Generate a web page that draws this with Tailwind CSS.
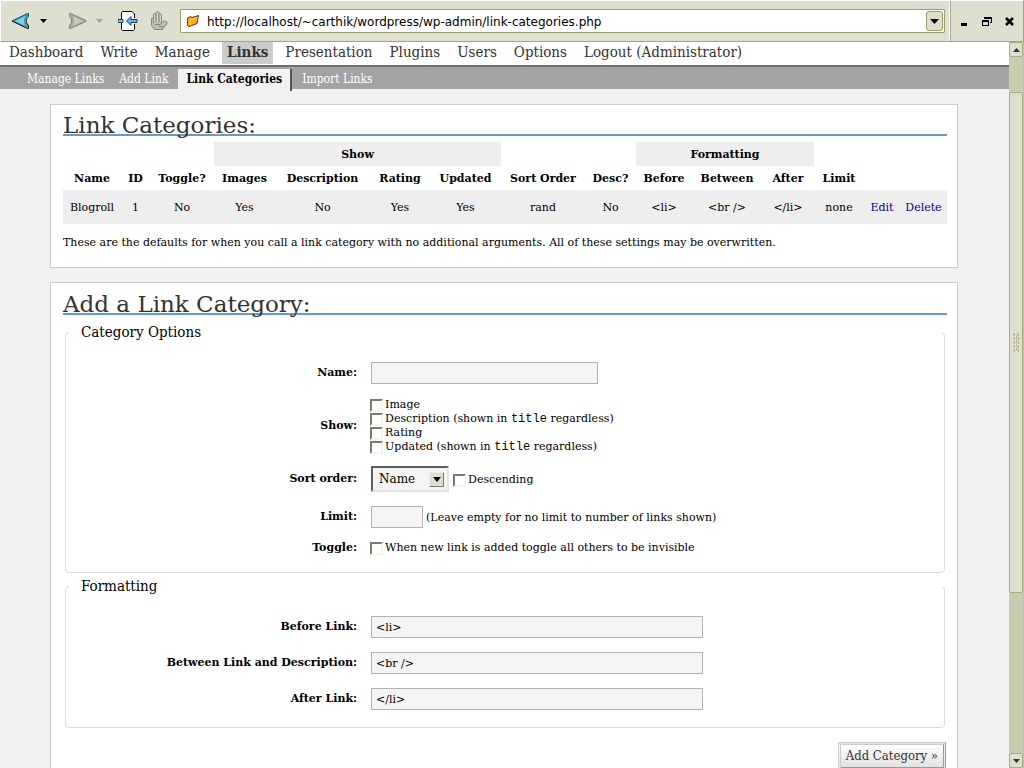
<!DOCTYPE html>
<html lang="en">
<head>
<meta charset="utf-8">
<title>Link Categories</title>
<script src="https://cdn.jsdelivr.net/npm/@tailwindcss/browser@4"></script>
</head>
<body class="h-screen overflow-hidden flex flex-col bg-[#f1f1f1] text-black text-[11px] leading-[14px] font-['DejaVu_Serif',serif]">

<!-- Browser toolbar -->
<header class="h-[42px] shrink-0 flex items-center bg-[#dedfce] border-t border-t-white border-b border-b-[#a3a588] border-l border-l-white border-r border-r-[#a3a588]">
  <div class="w-[179px] shrink-0 flex items-center">
    <button type="button" aria-label="Back" class="ml-[10px]"><svg width="19" height="18" viewBox="0 0 19 18"><path d="M16.500 1.500h1v3l-2 2.500v4l2 2.500v3h-1L1 9.500v-1z" fill="#4c96b0"/><path d="M14.500 4L4 9l10.500 5-1.500-3V7z" fill="#7ed0f0"/><path d="M1 9l15.500-7.500h1v3l-2 2.500v4" fill="none" stroke="#1f4f66"/><path d="M1 9l15.500 7.500h1v-3l-2-2.500" fill="none" stroke="#111"/></svg></button>
    <button type="button" aria-label="Back history" class="ml-[10px]"><svg width="7" height="4" viewBox="0 0 7 4"><path d="M0 0h7L3.500 4z"/></svg></button>
    <button type="button" aria-label="Forward" class="ml-[21px]"><svg width="19" height="18" viewBox="0 0 19 18"><path d="M2.500 1.500h-1v3l2 2.500v4l-2 2.500v3h1L18 9.500v-1z" fill="#a9aa9f" stroke="#85867c"/><path d="M4.500 4L15 9 4.500 14 6 11V7z" fill="#c9cabd"/></svg></button>
    <button type="button" aria-label="Forward history" class="ml-[9px]"><svg width="7" height="4" viewBox="0 0 7 4"><path d="M0 0h7L3.500 4z" fill="#a3a49a"/></svg></button>
    <button type="button" aria-label="Reload" class="ml-[15px]"><svg width="20" height="20" viewBox="0 0 20 20"><path d="M3.500 1h10l3 3v15h-13z" fill="#fff"/><path d="M3.500 8V1.500l1-1h9.500l2.500 2.500V7M3.500 12v6.500l1 1h11l1-1V13" fill="none" stroke="#000"/><path d="M0 8.500h5v3H0z" fill="#8cc4ee" stroke="#1c3d5c"/><path d="M8.500 10L13 5.500v3h6v3h-6v3z" fill="#6db3e8" stroke="#1c3d5c"/></svg></button>
    <button type="button" aria-label="Stop" class="ml-[12px]"><svg width="18" height="20" viewBox="0 0 18 20"><path d="M4.500 18.500l-3-4V7.500L2.500 7l1 1V3.500l1-1 1.500 1V1.500l1-1h1l1 1V3l1-.500 1.500 1V12l2-2h1.500l2 1v2l-3 3-2 2.500z" fill="#bfc0b4" stroke="#85867c"/><path d="M3.500 7v5M6 3v8M9 3v8M11.500 12l-2 1.500M5 13.500h4l1.500 2.500h4M5 18.500h8" fill="none" stroke="#85867c"/><path d="M4.500 4v7M7.500 2v9M10.500 4v7" stroke="#d8d9cc"/></svg></button>
  </div>
  <div class="flex-1 h-6 flex items-center bg-white border border-[#9a9e69] rounded-[1px] pr-px">
    <svg class="ml-[5px] shrink-0" width="14" height="14" viewBox="0 0 14 14"><path d="M1.500 4l3-1.500L6 3.500l6.500-2-1.500 8L3 12.500l-1.500-1z" fill="#ffa91e" stroke="#5a3900"/><path d="M3.500 10.500L4.500 6l7-2.500" fill="none" stroke="#ffd84a"/></svg>
    <input type="text" aria-label="Address" value="http://localhost/~carthik/wordpress/wp-admin/link-categories.php" class="flex-1 min-w-0 ml-[7px] pt-px text-[12px] leading-4 font-['DejaVu_Sans',sans-serif] outline-none">
    <button type="button" aria-label="Show addresses" class="w-[17px] h-5 flex items-center justify-center bg-[#dedfce] border border-[#9a9e69] rounded-[3px]"><svg width="9" height="5" viewBox="0 0 9 5"><path d="M0 0h9L4.500 5z"/></svg></button>
  </div>
  <div class="w-[78px] h-full shrink-0 flex items-center">
    <div class="ml-1 w-[2px] h-full bg-white border-r border-[#a3a588]"></div>
    <button type="button" aria-label="Minimize" class="ml-[10px] mt-[6px]"><svg width="6" height="3"><path d="M0 0h6v3H0z"/></svg></button>
    <button type="button" aria-label="Restore" class="ml-[15px]"><svg width="10" height="9" viewBox="0 0 10 9" shape-rendering="crispEdges"><path d="M2.500 2V.500h7v5H8M2 1.500h8M.500 3.500h6v5h-6zM0 4.500h7" fill="none" stroke="#000"/></svg></button>
    <button type="button" aria-label="Close" class="ml-[13px]"><svg width="9" height="9" viewBox="0 0 9 9"><path d="M1 1l7 7M8 1L1 8" stroke="#000" stroke-width="2.500"/></svg></button>
  </div>
</header>

<div class="flex-1 min-h-0 flex">
  <div class="flex-1 min-w-0 overflow-hidden">
    <nav aria-label="Main menu" class="h-[25px] bg-white border-b-2 border-[#6d6d6d] flex gap-x-[7px] pl-1 text-[15px] leading-[20px] text-[#333] font-['DejaVu_Serif_Condensed','DejaVu_Serif',serif]">
      <a href="#" class="h-[22px] px-[5px]">Dashboard</a>
      <a href="#" class="h-[22px] px-[5px]">Write</a>
      <a href="#" class="h-[22px] px-[5px]">Manage</a>
      <a href="#" class="h-[22px] px-[5px] bg-[#ccc] font-bold">Links</a>
      <a href="#" class="h-[22px] px-[5px]">Presentation</a>
      <a href="#" class="h-[22px] px-[5px]">Plugins</a>
      <a href="#" class="h-[22px] px-[5px]">Users</a>
      <a href="#" class="h-[22px] px-[5px]">Options</a>
      <a href="#" class="h-[22px] px-[5px]">Logout (Administrator)</a>
    </nav>
    <nav aria-label="Links menu" class="h-[22px] bg-[#a3a3a3] flex gap-x-[5px] pl-[22px] text-[12px] leading-[24px] text-white font-['DejaVu_Serif_Condensed','DejaVu_Serif',serif]">
      <a href="#" class="px-[5px]">Manage Links</a>
      <a href="#" class="px-[5px]">Add Link</a>
      <a href="#" class="mt-[2px] h-[22px] leading-[20px] px-2 bg-[#f1f1f1] text-black font-bold border-r-2 border-[#555]">Link Categories</a>
      <a href="#" class="px-[5px]">Import Links</a>
    </nav>

    <main class="pl-[50px] pr-[51px]">
      <section class="mt-[15px] bg-white border border-[#ccc] pl-3 pr-[10px] pt-[11px] pb-[17px]">
        <h2 class="text-[23px] leading-[18px] text-[#333] border-b-2 border-[#69c]">Link Categories:</h2>
        <table class="mt-[6px] w-full table-fixed text-center">
          <colgroup>
            <col class="w-[58px]"><col class="w-[29px]"><col class="w-[64px]"><col class="w-[61px]"><col class="w-[95px]"><col class="w-[60px]"><col class="w-[71px]"><col class="w-[84px]"><col class="w-[51px]"><col class="w-[56px]"><col class="w-[70px]"><col class="w-[52px]"><col class="w-[50px]"><col class="w-[36px]"><col class="w-[47px]">
          </colgroup>
          <thead class="[&_th]:pt-[2px]">
            <tr class="h-6"><td colspan="3"></td><th colspan="4" class="bg-[#eee]">Show</th><td colspan="2"></td><th colspan="3" class="bg-[#eee]">Formatting</th><td colspan="3"></td></tr>
            <tr class="h-6 whitespace-nowrap"><th>Name</th><th>ID</th><th>Toggle?</th><th>Images</th><th>Description</th><th>Rating</th><th>Updated</th><th>Sort Order</th><th>Desc?</th><th>Before</th><th>Between</th><th>After</th><th>Limit</th><td></td><td></td></tr>
          </thead>
          <tbody class="[&_td]:pt-[2px]">
            <tr class="h-[34px] bg-[#eee] whitespace-nowrap"><td>Blogroll</td><td>1</td><td>No</td><td>Yes</td><td>No</td><td>Yes</td><td>Yes</td><td>rand</td><td>No</td><td>&lt;li&gt;</td><td>&lt;br /&gt;</td><td>&lt;/li&gt;</td><td>none</td><td><a href="#" class="text-[#009]">Edit</a></td><td><a href="#" class="text-[#009]">Delete</a></td></tr>
          </tbody>
        </table>
        <p class="mt-[12px]">These are the defaults for when you call a link category with no additional arguments. All of these settings may be overwritten.</p>
      </section>

      <section class="mt-[14px] bg-white border border-[#ccc] pl-3 pr-[10px] pt-[12px] pb-[18px]">
        <h2 class="text-[23px] leading-[18px] text-[#333] border-b-2 border-[#69c]">Add a Link Category:</h2>
        <form>
          <fieldset class="mt-[8px] mx-[2px] border border-[#ddd] rounded-[4px] pl-[3px] pr-[2px] pb-[17px]">
            <legend class="w-full pl-3 text-[15px] leading-[18px] font-['DejaVu_Serif_Condensed','DejaVu_Serif',serif]">Category Options</legend>
            <div class="mt-[21px] grid grid-cols-[33%_1fr] gap-x-[13px] items-center">
              <label for="name" class="text-right font-bold">Name:</label>
              <div><input id="name" type="text" class="block ml-px w-[227px] h-[22px] px-1 bg-[#f4f4f4] border border-[#b2b2b2]"></div>

              <span id="show" class="mt-[14px] text-right font-bold">Show:</span>
              <div role="group" aria-labelledby="show" class="mt-[14px]">
                <label class="flex items-center gap-[2px]"><input type="checkbox" class="appearance-none w-[13px] h-[13px] bg-white border-2 border-t-[#7b7b6b] border-l-[#7b7b6b] border-r-[#f4f4ec] border-b-[#f4f4ec]">Image</label>
                <label class="flex items-center gap-[2px]"><input type="checkbox" class="appearance-none w-[13px] h-[13px] bg-white border-2 border-t-[#7b7b6b] border-l-[#7b7b6b] border-r-[#f4f4ec] border-b-[#f4f4ec]"><span>Description (shown in <code class="text-[12px] leading-[12px] font-['Liberation_Mono',monospace]">title</code> regardless)</span></label>
                <label class="flex items-center gap-[2px]"><input type="checkbox" class="appearance-none w-[13px] h-[13px] bg-white border-2 border-t-[#7b7b6b] border-l-[#7b7b6b] border-r-[#f4f4ec] border-b-[#f4f4ec]">Rating</label>
                <label class="flex items-center gap-[2px]"><input type="checkbox" class="appearance-none w-[13px] h-[13px] bg-white border-2 border-t-[#7b7b6b] border-l-[#7b7b6b] border-r-[#f4f4ec] border-b-[#f4f4ec]"><span>Updated (shown in <code class="text-[12px] leading-[12px] font-['Liberation_Mono',monospace]">title</code> regardless)</span></label>
              </div>

              <label for="sort" class="mt-[12px] text-right font-bold">Sort order:</label>
              <div class="mt-[12px] flex items-center">
                <div class="relative ml-px">
                  <select id="sort" class="block appearance-none w-[78px] h-[26px] pl-[6px] text-[12px] bg-[#f4f4f4] border-2 border-t-[#5e5e5e] border-l-[#5e5e5e] border-r-[#e4e4e4] border-b-[#e4e4e4]"><option>Name</option><option>ID</option></select>
                  <span class="pointer-events-none absolute right-[5px] top-[6px] w-[15px] h-[15px] flex items-center justify-center bg-[#dedfce] border border-t-[#eeeee4] border-l-[#eeeee4] border-r-[#7b7b6b] border-b-[#7b7b6b]"><svg width="8" height="5" viewBox="0 0 8 5"><path d="M0 0h8L4 5z"/></svg></span>
                </div>
                <label class="ml-1 pt-[2px] flex items-center gap-[2px]"><input type="checkbox" class="appearance-none w-[13px] h-[13px] bg-white border-2 border-t-[#7b7b6b] border-l-[#7b7b6b] border-r-[#f4f4ec] border-b-[#f4f4ec]">Descending</label>
              </div>

              <label for="limit" class="mt-[14px] text-right font-bold">Limit:</label>
              <div class="mt-[14px] flex items-center gap-[3px]"><input id="limit" type="text" class="ml-px w-[52px] h-[22px] px-1 bg-[#f4f4f4] border border-[#b2b2b2]"><span class="pt-[2px]">(Leave empty for no limit to number of links shown)</span></div>

              <span id="toggle" class="mt-[13px] text-right font-bold">Toggle:</span>
              <label class="mt-[13px] flex items-center gap-[2px]"><input type="checkbox" aria-describedby="toggle" class="appearance-none w-[13px] h-[13px] bg-white border-2 border-t-[#7b7b6b] border-l-[#7b7b6b] border-r-[#f4f4ec] border-b-[#f4f4ec]">When new link is added toggle all others to be invisible</label>
            </div>
          </fieldset>

          <fieldset class="mt-[4px] mx-[2px] border border-[#ddd] rounded-[4px] pl-[3px] pr-[2px] pb-[17px]">
            <legend class="w-full pl-3 text-[15px] leading-[18px] font-['DejaVu_Serif_Condensed','DejaVu_Serif',serif]">Formatting</legend>
            <div class="mt-[21px] grid grid-cols-[33%_1fr] gap-x-[13px] gap-y-[14px] items-center">
              <label for="before" class="text-right font-bold">Before Link:</label>
              <div><input id="before" type="text" value="&lt;li&gt;" class="block ml-px w-[332px] h-[22px] px-1 bg-[#f4f4f4] border border-[#b2b2b2]"></div>
              <label for="between" class="text-right font-bold">Between Link and Description:</label>
              <div><input id="between" type="text" value="&lt;br /&gt;" class="block ml-px w-[332px] h-[22px] px-1 bg-[#f4f4f4] border border-[#b2b2b2]"></div>
              <label for="after" class="text-right font-bold">After Link:</label>
              <div><input id="after" type="text" value="&lt;/li&gt;" class="block ml-px w-[332px] h-[22px] px-1 bg-[#f4f4f4] border border-[#b2b2b2]"></div>
            </div>
          </fieldset>

          <div class="mt-[14px] mr-[1px] flex justify-end">
            <button type="submit" class="h-[28px] px-[5px] text-[13px] text-[#333] bg-linear-to-b from-white to-[#e2e2e2] border-[3px] border-double border-t-[#ccc] border-l-[#ccc] border-r-[#999] border-b-[#999] font-['DejaVu_Serif_Condensed','DejaVu_Serif',serif]">Add Category »</button>
          </div>
        </form>
      </section>
    </main>
  </div>

  <!-- Scroll bar -->
  <div class="w-[15px] shrink-0 flex flex-col bg-[#caccb1] border-r border-[#c0c2a2]">
    <button type="button" aria-label="Scroll up" class="h-[15px] shrink-0 flex items-center justify-center bg-[#dedfce] border border-[#a9ad7c] rounded-[2px]"><svg width="7" height="4" viewBox="0 0 7 4"><path d="M0 4h7L3.500 0z" fill="#333"/></svg></button>
    <div class="flex-1 flex flex-col">
      <div class="h-[5%]"></div>
      <div class="h-[72%] flex items-center justify-center bg-[#dedfce] border border-[#a9ad7c] rounded-[2px]">
        <svg width="7" height="19" viewBox="0 0 7 19" shape-rendering="crispEdges"><path d="M1 0v3M5 0v3M1 4v3M5 4v3M1 8v3M5 8v3M1 12v3M5 12v3M1 16v3M5 16v3M3 2v3M3 6v3M3 10v3M3 14v3M0 1.500h2M4 1.500h2M0 5.500h2M4 5.500h2M0 9.500h2M4 9.500h2M0 13.500h2M4 13.500h2M0 17.500h2M4 17.500h2" stroke="#b4b78c" fill="none"/></svg>
      </div>
    </div>
    <button type="button" aria-label="Scroll down" class="h-[15px] shrink-0 flex items-center justify-center bg-[#dedfce] border border-[#a9ad7c] rounded-[2px]"><svg width="7" height="4" viewBox="0 0 7 4"><path d="M0 0h7L3.500 4z" fill="#333"/></svg></button>
  </div>
</div>
</body>
</html>
